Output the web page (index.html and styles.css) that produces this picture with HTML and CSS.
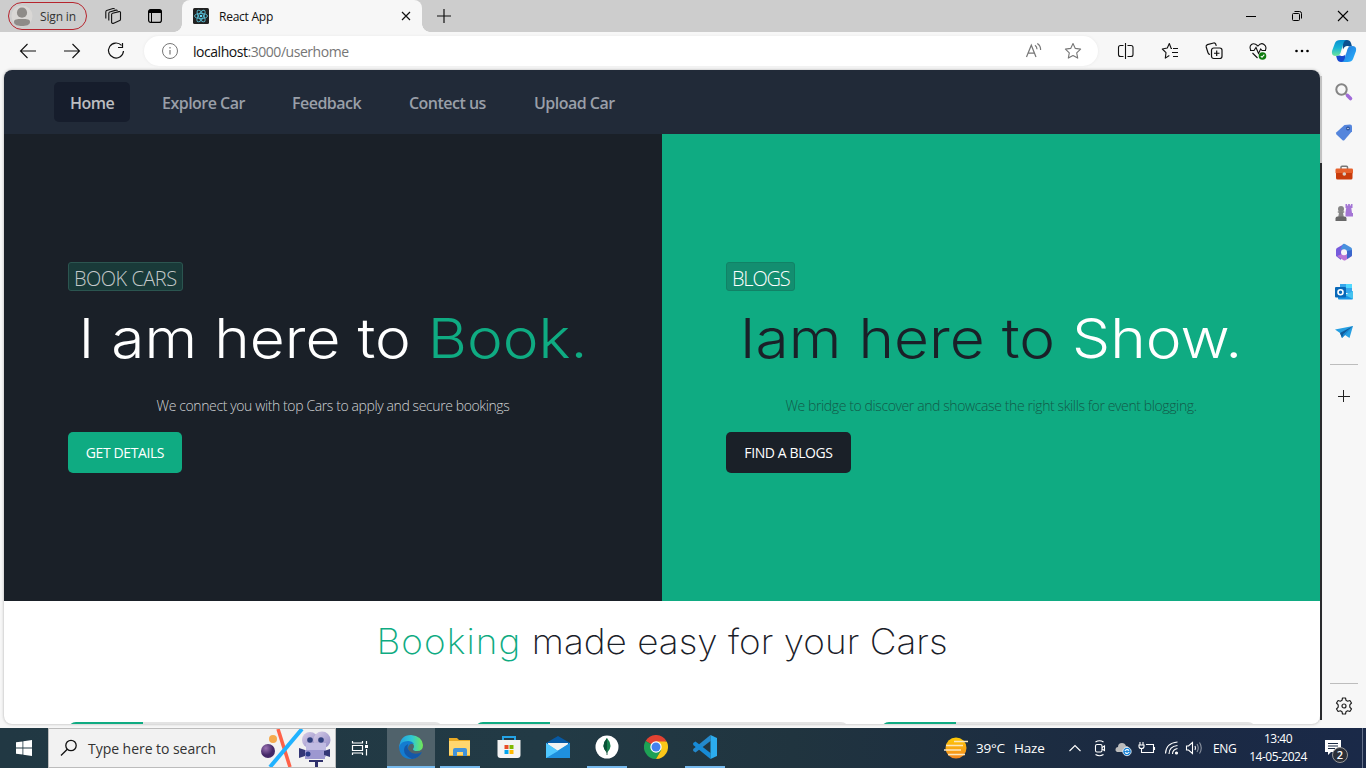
FILE: index.html
```html
<!DOCTYPE html>
<html lang="en">
<head>
<meta charset="utf-8">
<title>React App</title>
<link rel="stylesheet" href="styles.css">
</head>
<body>
<header class="tabstrip">
  <div class="profile">
    <svg width="22" height="22" viewBox="0 0 22 22"><circle cx="11" cy="11" r="10.5" fill="#d9d7d5"/><circle cx="11" cy="7.7" r="5.1" fill="#8e8b88"/><path d="M3 17c0-3 3-3 8-3s8 0 8 3-4 4-8 4-8-1-8-4z" fill="#8e8b88"/></svg>
    <span class="t-signin">Sign in</span>
  </div>
  <svg class="ico-spaces" width="18" height="18" viewBox="0 0 18 18" fill="none" stroke="#111" stroke-width="1.1" stroke-linejoin="round"><path d="M7.6 7.6q0-1 1-1.300l6.400-1.700q1.300-.3 1.500.8v6.800q0 1-.8 1.300l-6 2.700q-1.500.5-2.100-.8zM4.800 13.400V6.400q0-1 .9-1.400L12 3.100q1-.2 1.400.8M1.800 11.400V5q0-1 .9-1.400L9 1.600q1-.3 1.600.5"/></svg>
  <svg class="ico-vtabs" width="16" height="16" viewBox="0 0 16 16"><rect x="1.600" y="1.600" width="12.800" height="12.800" rx="2.200" fill="none" stroke="#000" stroke-width="1.200"/><path d="M1.500 5V3.500q0-2 2-2h9q2 0 2 2V5z"/><path d="M4.500 5v9" stroke="#000"/></svg>
  <div class="tab">
    <svg width="16" height="16" viewBox="0 0 16 16"><rect width="16" height="16" rx="1.500" fill="#222"/><g fill="none" stroke="#58bcd3" stroke-width=".9"><ellipse cx="8" cy="8" rx="6.500" ry="2.600"/><ellipse cx="8" cy="8" rx="6.500" ry="2.600" transform="rotate(60 8 8)"/><ellipse cx="8" cy="8" rx="6.500" ry="2.600" transform="rotate(120 8 8)"/></g><circle cx="8" cy="8" r="1.300" fill="#61dafb"/></svg>
    <span class="t-tab">React App</span>
    <svg class="tab-close" width="10" height="10" viewBox="0 0 10 10" stroke="#111" stroke-width="1.200"><path d="M1 1l8 8M9 1l-8 8"/></svg>
  </div>
  <svg class="newtab" width="14" height="14" viewBox="0 0 14 14" stroke="#111" stroke-width="1.200"><path d="M7 0v14M0 7h14"/></svg>
  <div class="wincontrols">
    <span><svg width="12" height="12" viewBox="0 0 12 12" stroke="#000"><path d="M1 6.500h10"/></svg></span>
    <span><svg width="12" height="12" viewBox="0 0 12 12" fill="none" stroke="#000"><rect x="1.500" y="3.500" width="7" height="7" rx="1"/><path d="M3.500 1.500h5q2 0 2 2v5"/></svg></span>
    <span><svg width="12" height="12" viewBox="0 0 12 12" stroke="#000" stroke-width="1.100"><path d="M1 1l10 10M11 1L1 11"/></svg></span>
  </div>
</header>

<nav class="toolbar">
  <span class="tool"><svg width="18" height="16" viewBox="0 0 18 16" fill="none" stroke="#111" stroke-width="1.100"><path d="M17 8H2M8.500 1L1.500 8l7 7"/></svg></span>
  <span class="tool"><svg width="18" height="16" viewBox="0 0 18 16" fill="none" stroke="#111" stroke-width="1.100"><path d="M1 8h15M9.500 1l7 7-7 7"/></svg></span>
  <span class="tool"><svg width="18" height="18" viewBox="0 0 18 18" fill="none" stroke="#111" stroke-width="1.200"><path d="M14.500 3.400A7.500 7.500 0 1 0 16.500 9M15.500 1v4.500H11"/></svg></span>
  <div class="address">
    <svg width="18" height="18" viewBox="0 0 18 18" fill="none" stroke="#777"><circle cx="9" cy="9" r="7.500"/><path d="M9 8v4.500" stroke-width="1.200"/><path d="M9 5v1.500" stroke-width="1.200"/></svg>
    <span class="url">localhost<span class="path">:3000/userhome</span></span>
    <svg class="read" width="18" height="18" viewBox="0 0 18 18" fill="none" stroke="#777" stroke-width="1.200"><path d="M1.500 15L6.300 3.200 11 15M3.200 11.200h6.200M10 3.300q2 1.500 2 4M12.300 1.500q3.500 2.300 3.300 6.500"/></svg>
    <svg class="fav" width="18" height="18" viewBox="0 0 18 18" fill="none" stroke="#777" stroke-width="1.100" stroke-linejoin="round"><path d="M9 1.500l2.300 4.900 5.300.7-3.900 3.700 1 5.300L9 13.500l-4.700 2.600 1-5.300L1.400 7.100l5.300-.7z"/></svg>
  </div>
  <span class="tool first"><svg width="18" height="18" viewBox="0 0 18 18" fill="none" stroke="#111" stroke-width="1.100"><path d="M6.500 3.500H3.500Q1.500 3.500 1.500 5.500v7q0 2 2 2h3M10.500 3.500h3.500q2 0 2 2v7q0 2-2 2h-3.500M8.500 1v16"/></svg></span>
  <span class="tool"><svg width="18" height="18" viewBox="0 0 18 18" fill="none" stroke="#111" stroke-width="1.100" stroke-linejoin="round"><path d="M11 6.500h-.8L8.300 1.500 6.300 6l-5 1 3.700 3.600-.7 5.500 4-2.600M12 6.500h5M11 10.500h6M12 14.500h5"/></svg></span>
  <span class="tool"><svg width="18" height="18" viewBox="0 0 18 18" fill="none" stroke="#111" stroke-width="1.200"><rect x="6.500" y="6" width="10.500" height="10.500" rx="2.200"/><path d="M11.700 8.500v5.500M9 11.250h5.500M5 12.500q-1.500-.3-2-1.800L1.200 5q-.4-1.800 1.200-2.400L8.600 1q1.500-.3 2.100 1.100l.6 1.800"/></svg></span>
  <span class="tool"><svg width="18" height="18" viewBox="0 0 18 18" fill="none" stroke="#111" stroke-width="1.100"><path d="M1.800 8Q0 4.500 2.500 2.500T9 4q3-3.700 6-1.500T16.400 8M1 8.500h4l2-3 2.500 6L11.700 7l1.300 1.500h4M3.500 11l5 5"/><circle cx="13.500" cy="14" r="3.800" fill="#107c10" stroke="none"/><path d="M11.800 14l1.200 1.300 2.300-2.600" stroke="#fff"/></svg></span>
  <span class="tool"><svg width="16" height="4" viewBox="0 0 16 4"><circle cx="2.500" cy="2" r="1.300"/><circle cx="8" cy="2" r="1.300"/><circle cx="13.500" cy="2" r="1.300"/></svg></span>
  <span class="copilot"><svg width="26" height="24" viewBox="0 0 26 24"><defs><linearGradient id="cpa" x2="0" y2="1"><stop stop-color="#078fd0"/><stop offset=".5" stop-color="#18b5d6"/><stop offset="1" stop-color="#6ee59b"/></linearGradient><linearGradient id="cpb" x2="1" y2="1"><stop stop-color="#2371d6"/><stop offset="1" stop-color="#27b4ff"/></linearGradient></defs><path d="M11 1h5q3 0 4 3l1 3.500h-5q-3 0-4 3z" fill="#0b4f8f"/><path d="M15 23h-5q-3 0-4-3l-1-3.500h5q3 0 4-3z" fill="#1648cf"/><path d="M9.500 1H16q-2.500 0-3.500 3l-3 10q-1 3-4.500 3-5 0-4-5l3-8q1-3 5.500-3z" fill="url(#cpa)"/><path d="M16.500 23H10q2.500 0 3.500-3l3-10q1-3 4.500-3 5 0 4 5l-3 8q-1 3-5.500 3z" fill="url(#cpb)"/><path d="M13.300 9q.7-2 3.200-2h1.500q-1.500 1-2 3l-1.500 5q-.7 2-3 2H9q1.500-1 2-2.500z" fill="#fff"/></svg></span>
</nav>

<div class="stage">
  <main class="page">
    <nav class="sitenav">
      <a class="current t-home">Home</a><a class="t-explore">Explore Car</a><a class="t-feedback">Feedback</a><a class="t-contact">Contect us</a><a class="t-upload">Upload Car</a>
    </nav>
    <section class="heroes">
      <div class="hero dark">
        <span class="tag">BOOK CARS</span>
        <h1>I am here to <b>Book.</b></h1>
        <p>We connect you with top Cars to apply and secure bookings</p>
        <a class="btn">GET DETAILS</a>
      </div>
      <div class="hero green">
        <span class="tag">BLOGS</span>
        <h1>Iam here to <b>Show.</b></h1>
        <p>We bridge to discover and showcase the right skills for event blogging.</p>
        <a class="btn">FIND A BLOGS</a>
      </div>
    </section>
    <h2><b>Booking</b> made easy for your Cars</h2>
    <div class="cards"><div class="card"><i></i></div><div class="card"><i></i></div><div class="card"><i></i></div></div>
  </main>
  <div class="scroll"><div class="thumb"></div></div>
  <aside class="side">
    <span><svg width="20" height="20" viewBox="0 0 20 20"><circle cx="7.500" cy="7.500" r="5.200" fill="none" stroke="#858585" stroke-width="2"/><path d="M11.500 11.500l1.500 1.500" stroke="#858585" stroke-width="1.500"/><path d="M13.500 13.500l3 3" stroke="#a16bd9" stroke-width="3.600" stroke-linecap="round"/></svg></span>
    <span><svg width="20" height="20" viewBox="0 0 20 20"><path d="M10.500 3l5.500-.4q2 0 2 1.700v5L10.500 18q-1 1-2.200 0l-5.800-5.400q-1-1.100 0-2.300z" fill="#5485dc"/><circle cx="14" cy="6.500" r="1.300" fill="#fff" stroke="#28529c" stroke-width="1.200"/></svg></span>
    <span><svg width="20" height="20" viewBox="0 0 20 20"><path d="M7 7V5.200q0-1 1-1h4.500q1 0 1 1V7" fill="none" stroke="#777" stroke-width="1.500"/><rect x="1.500" y="6.500" width="17.500" height="5" rx="1.300" fill="#e6612c"/><path d="M2 11h16.500v5q0 1.500-1.500 1.500H3.500Q2 17.500 2 16z" fill="#c93c0c"/><circle cx="10.300" cy="12" r="1.800" fill="#d8d0c9"/></svg></span>
    <span><svg width="20" height="20" viewBox="0 0 20 20"><path d="M11.500 2h1.600v1.500h1V2h1.800v1.500h1V2h1.600v4h-1.200l.7 5h1v3.500h-7.500V11l.7-5h-.7z" fill="#a475d5"/><g fill="#858585"><circle cx="7" cy="7" r="3"/><path d="M3.800 9.300h6.400v1.500H9l.8 4.200H4.200l.8-4.200H3.800z"/><path d="M1.500 16.500q0-2 2-2h7q2 0 2 2V19h-11z" fill="#686868"/></g></svg></span>
    <span><svg width="20" height="20" viewBox="0 0 20 20"><path d="M10 2L3 6q-1 .7-1 2v6l5 4 1-7 2-3z" fill="#765bdc"/><path d="M9 2q1-.6 2 0l6 3.500q1 .6 1 2V13l-5-2.500L9.500 7 6 8z" fill="#4a91de"/><path d="M18 9v4q0 1-1 1.700l-5.500 3.500q-1 .5-2 0L3 14l5-2 2 1 3-1z" fill="#ba76d6"/><path d="M13 9l5-1v5q0 1-1 1.500L13 17v-4z" fill="#3966cc"/><circle cx="10" cy="10.300" r="3" fill="#f7f7f7"/></svg></span>
    <span><svg width="20" height="20" viewBox="0 0 20 20"><path d="M6 2h12v9H6z" fill="#36a7ec"/><path d="M12 2h6v4h-6z" fill="#50d9ff"/><path d="M4 9l7 4 8-4v7.500q0 1-1 1H5q-1 0-1-1z" fill="#1794e5"/><path d="M19 9v8l-8-4z" fill="#45c2ef"/><rect x="1" y="5" width="11" height="10.500" rx="1" fill="#0868b8"/><circle cx="6.500" cy="10.200" r="2.500" fill="none" stroke="#fff" stroke-width="1.600"/></svg></span>
    <span><svg width="20" height="20" viewBox="0 0 20 20"><path d="M1 7.500L19 4l-3.500 12-4.500-3-3 3-2-5z" fill="#269fe2"/><path d="M19 4L6 11l2 5 1.500-4z" fill="#115b9b"/><path d="M19 4L9.500 12 8 16l3-3z" fill="#1786cf"/></svg></span>
    <hr>
    <span class="plus"><svg width="12" height="12" viewBox="0 0 12 12" stroke="#222" stroke-width="1"><path d="M5.500 0v12M0 6.500h12"/></svg></span>
    <hr class="low">
    <span class="gear"><svg width="18" height="18" viewBox="0 0 18 18" fill="none" stroke="#222" stroke-width="1.200" stroke-linejoin="round"><path d="M7.500 1h3l.5 2.300 1.600.9 2.300-.7L16.500 6l-1.700 1.800v2.400l1.700 1.800-1.600 2.500-2.300-.7-1.600.9-.5 2.300h-3L7 14.700l-1.600-.9-2.300.7L1.500 12l1.700-1.800V7.800L1.500 6l1.600-2.500 2.300.7L7 3.300z"/><circle cx="9" cy="9" r="2"/></svg></span>
  </aside>
</div>

<footer class="taskbar">
  <span class="start"><svg width="16" height="16" viewBox="0 0 16 16" fill="#fff"><path d="M0 2.300L6.500 1.400v6.200H0zM7.300 1.300L16 0v7.600H7.300zM0 8.400h6.500v6.200L0 13.700zM7.300 8.400H16V16l-8.700-1.300z"/></svg></span>
  <div class="search">
    <svg class="mag" width="18" height="18" viewBox="0 0 18 18" fill="none" stroke="#111" stroke-width="1.300"><circle cx="11" cy="6.500" r="5.200"/><path d="M7.300 10.200L1 16.500"/></svg>
    <span class="t-search">Type here to search</span>
    <svg class="art" width="76" height="38" viewBox="0 0 76 38"><defs><radialGradient id="ga" cx=".35" cy=".3"><stop stop-color="#9b72b3"/><stop offset="1" stop-color="#432867"/></radialGradient><linearGradient id="gb" x2="1" y2="1"><stop stop-color="#d9cfe8"/><stop offset="1" stop-color="#8f88c4"/></linearGradient></defs><circle cx="14" cy="10" r="4" fill="#f4aa4d"/><circle cx="9" cy="22" r="7" fill="url(#ga)"/><path d="M19 0l12 38" stroke="#ff6148" stroke-width="3.500"/><path d="M43 0L11 38" stroke="#20b2ff" stroke-width="4"/><circle cx="51" cy="11" r="8" fill="url(#gb)"/><circle cx="63" cy="11" r="8.500" fill="url(#gb)"/><path d="M47 14h20v14H47z" fill="#c0bbe2"/><path d="M46 21h20v9H46z" fill="#9d98d0"/><path d="M40 19l6 2v6l-6 2zM71 20l-6 2v4l6 2z" fill="#343776"/><circle cx="51" cy="11" r="2.800" fill="#30407e"/><circle cx="62" cy="11" r="2.800" fill="#30407e"/><circle cx="49" cy="25" r="2.500" fill="#293b88"/><path d="M50 31h14v2h-5v5h-3v-5h-6z" fill="#2f306b"/></svg>
  </div>
  <span class="view"><svg width="18" height="18" viewBox="0 0 18 18" fill="none" stroke="#fff" stroke-width="1.200"><path d="M1.500 2v2h10V2M1.500 16v-2h10v2M1.500 6.500h10v5h-10zM15.500 2v3M15.500 10v6.500"/><path d="M14 6h3v3h-3z" fill="#fff" stroke="none"/></svg></span>
  <span class="app active"><svg width="26" height="26" viewBox="0 0 26 26"><defs><linearGradient id="ea"><stop stop-color="#219de2"/><stop offset=".55" stop-color="#30c9d2"/><stop offset="1" stop-color="#72e854"/></linearGradient></defs><path d="M1 14Q2 1 13 1q11 1 12 10 0 6-6 6-4 0-4-2 1-1 1-3-1-4-6-3-6 0-9 5z" fill="url(#ea)"/><path d="M1 13q2-6 9-6 4 0 6 3-5-1-6 4 0 7 7 7 4 0 7-3-4 7-11 7Q2 25 1 13z" fill="#147cd0"/><path d="M10 10q-4 2-4 6 0 6 8 9 7-1 10-7-5 3-10 1-6-3-4-9z" fill="#1458a8"/></svg></span>
  <span class="app open"><svg width="24" height="22" viewBox="0 0 24 22"><path d="M1 2h8l2 2h11v16H1z" fill="#e9aa25"/><path d="M1 5h21v14H1z" fill="#ffd66e"/><path d="M5 20v-6q0-2 2-2h10q2 0 2 2v6h-4v-4H9v4z" fill="#4192d9"/></svg></span>
  <span class="app"><svg width="24" height="26" viewBox="0 0 24 26"><path d="M6 7V3h12v4" fill="none" stroke="#24a4e7" stroke-width="2"/><path d="M.5 6h23v15q0 3-3 3h-17q-3 0-3-3z" fill="#f3f3f3"/><path d="M7.500 11h4v4h-4z" fill="#e84b27"/><path d="M12.500 11h4v4h-4z" fill="#7fb900"/><path d="M7.500 16h4v4h-4z" fill="#00a4ef"/><path d="M12.500 16h4v4h-4z" fill="#ffb900"/></svg></span>
  <span class="app"><svg width="24" height="24" viewBox="0 0 24 24"><path d="M0 8l12-7 12 7v7H0z" fill="#0759a4"/><path d="M2 8h20v8H2z" fill="#f2f2f2"/><path d="M0 8l12 8 12-8v15H0z" fill="#35adf1"/><path d="M0 23L24 8v15z" fill="#1f90dd"/><path d="M0 8l12 8L0 23z" fill="#50c8ff"/></svg></span>
  <span class="app open"><svg width="24" height="24" viewBox="0 0 24 24"><circle cx="12" cy="12" r="11.500" fill="#fff"/><path d="M12 3q7 8 0 15-7-7 0-15z" fill="#16804d"/><path d="M12 3q-7 8 0 15z" fill="#0a5137"/><path d="M12 15v5" stroke="#365"/></svg></span>
  <span class="app"><svg width="24" height="24" viewBox="0 0 24 24"><path d="M12 12L1.600 6A12 12 0 0 1 22.400 6z" fill="#e24232"/><path d="M12 12L1.600 6A12 12 0 0 0 12 24l5.200-9z" fill="#1ea155"/><path d="M12 6.500h10.700A12 12 0 0 1 12 24l5.200-9z" fill="#fbc719"/><circle cx="12" cy="12" r="5.700" fill="#fff"/><circle cx="12" cy="12" r="4.500" fill="#4281ee"/></svg></span>
  <span class="app open"><svg width="26" height="26" viewBox="0 0 26 26"><path d="M18.500 7L3.500 18.500 1.200 17v-2L18.500 1z" fill="#2489cc"/><path d="M18.500 19L3.500 7.500 1.200 9v2l17.300 14z" fill="#178bd7"/><path d="M18.500 1L25 4v18l-6.500 3z" fill="#2cacee"/></svg></span>
  <div class="weather">
    <svg width="26" height="22" viewBox="0 0 26 22"><defs><linearGradient id="su" x2="0" y2="1"><stop stop-color="#ffcb05"/><stop offset="1" stop-color="#f38620"/></linearGradient></defs><circle cx="13" cy="11" r="10.500" fill="url(#su)"/><path d="M11 4.500h14M3 8.500h17M1 13h17M5 17.500h17" stroke="#fbe6be" stroke-width="1.600"/></svg>
    <span class="t-temp">39°C</span><span class="t-haze">Haze</span>
  </div>
  <div class="tray">
    <svg width="14" height="20" viewBox="0 0 14 20"><path d="M1.500 13L7 7.500l5.500 5.500"/></svg>
    <svg class="cam" width="14" height="20" viewBox="0 0 14 20"><rect x="2.500" y="6.500" width="6.500" height="7.500" rx="1.500"/><path d="M9 9.500l2.500-1.500v4.500L9 11M2.500 4q4-2.500 8 0M2.500 16.500q4 2.500 8 0"/></svg>
    <svg class="cloud" width="18" height="20" viewBox="0 0 18 20"><path d="M3 14q-2-1-1.500-3T4 9q0-4 4-4 3 0 4 3 3 0 3 3v3z" fill="#bbb" stroke="none"/><circle cx="13" cy="13.500" r="4.200" fill="#1682d7" stroke="#fff" stroke-width=".8"/><path d="M10.800 13q2-2.500 4.300-.5M15.300 14q-2 2.500-4.300.5" stroke="#fff"/></svg>
    <svg class="battery" width="18" height="20" viewBox="0 0 18 20"><path d="M8 6.500h7.500v8H5M16.500 9v3M2 4v3M5 4v3M1 7h5v1.500q0 2-2.500 2T1 8.500zM3.500 10v4.500H6"/></svg>
    <svg class="wifi" width="16" height="20" viewBox="0 0 16 20"><path d="M1.500 15.500Q2 5 13.500 4M5 16Q5 8.500 13.500 7.500M8.500 16q0-4.500 5-5.500"/><circle cx="12.500" cy="15" r="1" fill="#fff"/></svg>
    <svg class="vol" width="18" height="20" viewBox="0 0 18 20"><path d="M1.500 8v4h2l4 3.500v-11L3.500 8zM10 8q1 2 0 4"/><path d="M12 6q2.500 4 0 8M14.500 4.500q3.500 5.500 0 11" opacity=".5"/></svg>
    <span class="t-eng">ENG</span>
  </div>
  <div class="clock"><span>13:40</span><span class="t-date">14-05-2024</span></div>
  <div class="notice"><svg width="18" height="18" viewBox="0 0 18 18"><path d="M1 1h16v12H7l-3 3v-3H1z" fill="#fff"/><path d="M4 4.500h10M4 7h10M4 9.500h7" stroke="#1b2b44"/></svg><span class="badge">2</span></div>
</footer>
</body>
</html>
```

FILE: styles.css
```css
* { box-sizing: border-box; }
svg { display: block; flex: none; }
body {
  margin: 0; width: 1366px; height: 768px; overflow: hidden;
  display: flex; flex-direction: column;
  background: #f7f7f7; color: #111;
  font-family: "Open Sans", "Noto Sans", sans-serif; font-size: 12px;
  white-space: nowrap;
}

/* Tab strip */
.tabstrip { height: 32px; flex: none; background: #cdcdcd; display: flex; align-items: center; padding-left: 8px; }
.profile { width: 79px; height: 28px; border: 1px solid #b6242d; border-radius: 14px; display: flex; align-items: center; padding-left: 2px; gap: 7px; color: #333; }
.t-signin { letter-spacing: -.15px; }
.ico-spaces { margin-left: 17px; }
.ico-vtabs { margin-left: 25px; }
.tab { position: relative; width: 240px; height: 32px; margin-left: 19px; padding: 0 11px; background: #f7f7f7; border-radius: 8px 8px 0 0; display: flex; align-items: center; }
.tab::before, .tab::after { content: ""; position: absolute; bottom: 0; width: 8px; height: 8px; }
.tab::before { left: -8px; background: radial-gradient(circle at 0 0, transparent 7.5px, #f7f7f7 8px); }
.tab::after { right: -8px; background: radial-gradient(circle at 100% 0, transparent 7.5px, #f7f7f7 8px); }
.t-tab { margin-left: 10px; letter-spacing: -.25px; }
.tab-close { margin-left: auto; }
.newtab { margin-left: 15px; }
.wincontrols { margin-left: auto; display: flex; }
.wincontrols span { width: 46px; display: flex; justify-content: center; }

/* Toolbar */
.toolbar { height: 38px; flex: none; display: flex; align-items: center; padding-left: 6px; }
.tool { width: 44px; display: flex; justify-content: center; }
.tool.first { margin-left: 6px; }
.address { width: 954px; height: 30px; margin-left: 6px; padding: 0 16px 0 17px; border-radius: 15px; background: #fff; box-shadow: 0 0 3px #e8e8e8; display: flex; align-items: center; }
.url { margin-left: 14px; font-size: 14px; letter-spacing: -.46px; }
.path { color: #767676; }
.read { margin-left: auto; }
.fav { margin-left: 21px; }
.copilot { width: 40px; display: flex; justify-content: center; }

/* Page frame */
.stage { height: 658px; flex: none; display: flex; padding-left: 4px; }
.page { width: 1316px; height: 654px; overflow: hidden; background: #fff; border-radius: 8px; box-shadow: 0 0 3px #aaa; }
.scroll { width: 2px; height: 644px; margin-top: 6px; background: #292a2d; }
.thumb { height: 87px; background: #c2c2c2; }
.sitenav { height: 64px; background: #212a38; display: flex; align-items: center; gap: 16px; padding-left: 50px; }
.sitenav a { height: 40px; padding: 0 16px; border-radius: 5px; font: 600 16px/42px "Open Sans", sans-serif; letter-spacing: -.52px; color: #999fa8; }
.sitenav .current { background: #161d2c; color: #bcbdc0; }
.t-home { width: 76px; }
.t-explore { width: 114px; }
.t-feedback { width: 101px; }
.t-contact { width: 109px; }
.heroes { display: flex; height: 467px; }
.hero { width: 658px; padding: 128px 64px 0; display: flex; flex-direction: column; align-items: flex-start; }
.dark { background: #1a2028; color: #fff; }
.green { background: #0fab82; color: #1a2028; }
.tag { height: 29px; padding: 0 5px; border: 1px solid #2b5550; border-radius: 3px; background: #193a39; color: #c4c8c9; font: 300 20px/31px "Open Sans", sans-serif; letter-spacing: -.5px; }
.green .tag { border-color: #118266; background: #138e70; color: #fff; letter-spacing: -1.2px; }
.dark .tag { width: 115px; }
.green .tag { width: 69px; }
h1, h2 { margin: 0; font-family: Inter, "Open Sans", sans-serif; font-weight: 300; text-align: center; }
b { font-weight: inherit; }
h1 { align-self: stretch; margin-top: 14px; font-size: 55px; font-weight: 280; line-height: 66px; transform: scaleX(1.098); }
.dark b, h2 b { color: #0fab82; }
.green b { color: #fff; }
.hero p { align-self: stretch; margin: 24px 0 0; text-align: center; font: 300 14px/21px "Open Sans", sans-serif; height: 20px; letter-spacing: -.39px; color: #d0d2d4; }
.green p { color: #125a49; }
.btn { height: 41px; margin-top: 17px; border-radius: 5px; text-align: center; font: 400 14px/42px "Open Sans", sans-serif; letter-spacing: -.4px; color: #fff; }
.dark .btn { width: 114px; background: #0fab82; }
.green .btn { width: 125px; background: #1a2028; }
h2 { height: 121px; padding-top: 17px; font-size: 35px; font-weight: 250; line-height: 46px; color: #1a2028; transform: scaleX(1.055); }
h2 b { letter-spacing: 1px; }
.cards { display: grid; grid-template-columns: repeat(3, 1fr); gap: 32px; padding: 0 64px; }
.card { height: 40px; border-radius: 8px; overflow: hidden; background: #e3e3e3; }
.card i { display: block; width: 20%; height: 8px; background: #0fab82; }

/* Browser sidebar */
.side { width: 44px; display: flex; flex-direction: column; align-items: center; padding-top: 2px; }
.side span { height: 40px; display: flex; align-items: center; }
.side hr { width: 28px; height: 1px; margin: 12px 0 11px; border: 0; background: #bdbdbd; }
.side .low { margin: 267px 0 2px; }

/* Taskbar */
.taskbar { height: 40px; flex: none; display: flex; align-items: center; position: relative; background: linear-gradient(90deg, #213843, #223a45 40%, #20343f 58%, #1b2a42 82%, #1a2948); color: #fff; font-size: 14px; }
.start, .view { width: 48px; display: flex; justify-content: center; }
.search { width: 288px; height: 40px; border: 1px solid #bcbcbc; background: #f2f2f2; display: flex; align-items: center; color: #333; }
.mag { margin-left: 11px; }
.t-search { margin-left: 10px; letter-spacing: -.04px; }
.art { margin-left: auto; }
.view { margin-right: 3px; }
.app { width: 48px; height: 40px; margin-right: 1px; display: flex; align-items: center; justify-content: center; border-bottom: 2px solid transparent; border-left: 4px solid transparent; border-right: 4px solid transparent; background-clip: padding-box; }
.open { background: linear-gradient(#76b9ed, #76b9ed) bottom / 40px 2px no-repeat border-box; }
.active { border: 0; border-bottom: 2px solid #76b9ed; background: #50626b; }
.weather { margin-left: 213px; width: 104px; display: flex; align-items: center; }
.t-temp { margin-left: 7px; width: 38px; font-size: 13.500px; letter-spacing: -.2px; }
.t-haze { font-size: 13.500px; letter-spacing: -.2px; }
.tray { width: 175px; margin-left: 21px; display: flex; align-items: center; font-size: 12px; }
.tray svg { fill: none; stroke: #fff; stroke-width: 1.100; }
.cam { margin-left: 11px; }
.cloud { margin-left: 7px; }
.battery { margin-left: 6px; }
.wifi { margin-left: 8px; }
.vol { margin-left: 5px; }
.t-eng { margin-left: 10px; letter-spacing: -.4px; }
.clock { width: 68px; margin-left: 1px; text-align: center; font-size: 12px; line-height: 18px; display: flex; flex-direction: column; letter-spacing: -.5px; }
.notice { position: absolute; left: 1324px; top: 11px; }
.badge { position: absolute; left: 8px; top: 8px; width: 16px; height: 16px; border: 1px solid #999; border-radius: 50%; background: #2b2f38; font: 600 11px/14px "Open Sans", sans-serif; text-align: center; }
.taskbar::after { content: ""; position: absolute; right: 3px; top: 0; width: 1px; height: 40px; background: #65718a; }
```
